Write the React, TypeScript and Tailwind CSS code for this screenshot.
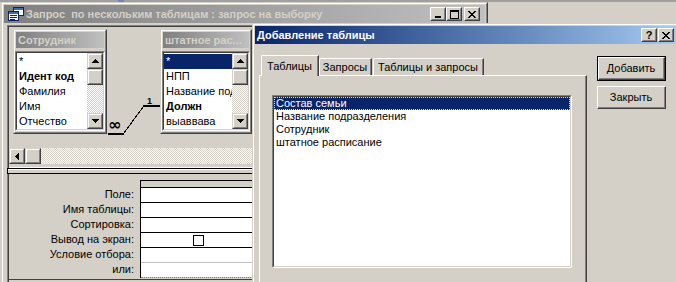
import React from 'react'

type Dir = 'up' | 'down' | 'left'

type Field = { name: string; bold?: boolean }

const employeeFields: Field[] = [
    { name: '*' },
    { name: 'Идент код', bold: true },
    { name: 'Фамилия' },
    { name: 'Имя' },
    { name: 'Отчество' },
]

const staffFields: Field[] = [
    { name: '*' },
    { name: 'НПП' },
    { name: 'Название подразделения' },
    { name: 'Должн', bold: true },
    { name: 'выаввава' },
]

const gridLabels = ['Поле:', 'Имя таблицы:', 'Сортировка:', 'Вывод на экран:', 'Условие отбора:', 'или:']

const tables = ['Состав семьи', 'Название подразделения', 'Сотрудник', 'штатное расписание']

function Arrow({ dir }: { dir: Dir }) {
    if (dir === 'left') {
        return (
            <svg width="4" height="7" viewBox="0 0 4 7" shapeRendering="crispEdges">
                <path d="M0 3h1v1H0zM1 2h1v3H1zM2 1h1v5H2zM3 0h1v7H3z" fill="#000" />
            </svg>
        )
    }
    return (
        <svg width="7" height="4" viewBox="0 0 7 4" shapeRendering="crispEdges">
            <path
                d={
                    dir === 'up'
                        ? 'M3 0h1v1H3zM2 1h3v1H2zM1 2h5v1H1zM0 3h7v1H0z'
                        : 'M0 0h7v1H0zM1 1h5v1H1zM2 2h3v1H2zM3 3h1v1H3z'
                }
                fill="#000"
            />
        </svg>
    )
}

function ScrollBtn({ dir }: { dir?: Dir }) {
    return (
        <div className="h-[16px] w-[16px] shrink-0 border border-t-[#d4d0c8] border-l-[#d4d0c8] border-r-[#404040] border-b-[#404040] bg-[#d4d0c8]">
            <div className="flex h-full w-full items-center justify-center border border-t-white border-l-white border-r-[#808080] border-b-[#808080]">
                {dir && <Arrow dir={dir} />}
            </div>
        </div>
    )
}

function CapBtn({ children }: { children: React.ReactNode }) {
    return (
        <div className="h-[14px] w-[16px] border border-t-white border-l-white border-r-[#404040] border-b-[#404040] bg-[#d4d0c8]">
            <div className="flex h-full w-full items-center justify-center border border-t-[#d4d0c8] border-l-[#d4d0c8] border-r-[#808080] border-b-[#808080]">
                {children}
            </div>
        </div>
    )
}

const CloseGlyph = () => (
    <svg width="8" height="7" viewBox="0 0 8 7" shapeRendering="crispEdges">
        <path d="M0 0h2v1H0zM6 0h2v1H6zM1 1h2v1H1zM5 1h2v1H5zM2 2h4v1H2zM3 3h2v1H3zM2 4h4v1H2zM1 5h2v1H1zM5 5h2v1H5zM0 6h2v1H0zM6 6h2v1H6z" fill="#000" />
    </svg>
)

function QueryIcon() {
    return (
        <svg width="16" height="16" viewBox="0 0 16 16" shapeRendering="crispEdges">
            <rect x="5.5" y="1.5" width="10" height="8" fill="#fff" stroke="#0a246a" />
            <rect x="6" y="2" width="9" height="2" fill="#3a6ea5" />
            <rect x="0.5" y="5.5" width="10" height="9" fill="#fff" stroke="#0a246a" />
            <rect x="1" y="6" width="9" height="2" fill="#3a6ea5" />
            <rect x="2" y="9" width="7" height="1" fill="#0a246a" />
            <rect x="2" y="11" width="7" height="1" fill="#0a246a" />
            <rect x="2" y="13" width="5" height="1" fill="#0a246a" />
        </svg>
    )
}

function FieldList({ pos, title, fields, selected }: { pos: string; title: string; fields: Field[]; selected?: number }) {
    return (
        <div className={`absolute h-[105px] ${pos} border border-t-[#d4d0c8] border-l-[#d4d0c8] border-r-[#404040] border-b-[#404040] bg-[#d4d0c8]`}>
            <div className="flex h-full flex-col border border-t-white border-l-white border-r-[#808080] border-b-[#808080]">
                <div className="mx-[1px] mt-[1px] flex h-[16px] shrink-0 items-center overflow-hidden whitespace-nowrap bg-linear-to-r from-[#808080] to-[#c0c0c0] pl-[2px] font-bold text-[#d4d0c8]">
                    {title}
                </div>
                <div className="mt-[3px] h-[80px] shrink-0 border border-t-[#808080] border-l-[#808080] border-r-white border-b-white">
                    <div className="flex h-full border border-t-[#404040] border-l-[#404040] border-r-[#d4d0c8] border-b-[#d4d0c8] bg-white">
                        <div className="min-w-0 flex-1 overflow-hidden pt-[1px]">
                            {fields.map((f, i) => (
                                <div
                                    key={f.name}
                                    className={`h-[15px] whitespace-nowrap pl-[2px] leading-[15px] ${f.bold ? 'font-bold' : ''} ${i === selected ? 'bg-[#0a246a] text-white' : ''}`}
                                >
                                    {f.name}
                                </div>
                            ))}
                        </div>
                        <div className="flex w-[16px] flex-col">
                            <ScrollBtn dir="up" />
                            <ScrollBtn />
                            <div className="flex-1 bg-[conic-gradient(#d4d0c8_25%,#ffffff_0_50%,#d4d0c8_0_75%,#ffffff_0)] bg-[length:2px_2px]" />
                            <ScrollBtn dir="down" />
                        </div>
                    </div>
                </div>
            </div>
        </div>
    )
}

function QueryWindow() {
    return (
        <div className="absolute left-[1px] top-[2px] h-[290px] w-[487px] border border-t-[#d4d0c8] border-l-[#d4d0c8] border-r-[#404040] border-b-[#404040]">
            <div className="flex h-full flex-col border border-t-white border-l-white border-r-[#808080] border-b-[#808080] p-[1px]">
                <div className="flex h-[18px] shrink-0 items-center bg-linear-to-r from-[#808080] to-[#c0c0c0]">
                    <div className="ml-[4px] flex">
                        <QueryIcon />
                    </div>
                    <span className="ml-[2px] whitespace-pre font-bold text-[#d4d0c8]">
                        Запрос  по нескольким таблицам : запрос на выборку
                    </span>
                    <div className="ml-auto mr-[5px] flex">
                        <CapBtn>
                            <svg width="6" height="7" viewBox="0 0 6 7" shapeRendering="crispEdges">
                                <rect x="0" y="5" width="6" height="2" fill="#000" />
                            </svg>
                        </CapBtn>
                        <CapBtn>
                            <svg width="9" height="9" viewBox="0 0 9 9" shapeRendering="crispEdges">
                                <path d="M0 0h9v2H0zM0 2h1v7H0zM8 2h1v7H8zM1 8h7v1H1z" fill="#000" />
                            </svg>
                        </CapBtn>
                        <div className="ml-[2px]">
                            <CapBtn>
                                <CloseGlyph />
                            </CapBtn>
                        </div>
                    </div>
                </div>

                <div className="ml-[3px] mt-[2px] flex-1 border-l border-t border-l-[#808080] border-t-[#808080]">
                    <div className="flex h-full flex-col border-l border-t border-l-[#404040] border-t-[#404040]">
                        {/* table pane */}
                        <div className="relative h-[121px] shrink-0">
                            <FieldList pos="left-[4px] top-[2px] w-[94px]" title="Сотрудник" fields={employeeFields} />
                            <FieldList pos="left-[151px] top-[2px] w-[92px]" title="штатное рас..." fields={staffFields} selected={0} />
                            <svg className="absolute left-0 top-0" width="160" height="121" shapeRendering="crispEdges">
                                <rect x="99" y="106" width="16" height="2" fill="#000" />
                                <line x1="114.5" y1="106.5" x2="134.5" y2="79.5" stroke="#000" strokeWidth="1" />
                                <rect x="134" y="78" width="17" height="2" fill="#000" />
                            </svg>
                            <span className="absolute left-[99px] top-[90px] font-['DejaVu_Sans',sans-serif] text-[16px] font-bold leading-none">
                                ∞
                            </span>
                            <span className="absolute left-[138px] top-[70px] text-[9px] font-bold leading-none">1</span>
                        </div>

                        {/* horizontal scrollbar */}
                        <div className="flex h-[16px] shrink-0">
                            <ScrollBtn dir="left" />
                            <ScrollBtn />
                            <div className="flex-1 bg-[conic-gradient(#d4d0c8_25%,#ffffff_0_50%,#d4d0c8_0_75%,#ffffff_0)] bg-[length:2px_2px]" />
                        </div>

                        {/* splitter */}
                        <div className="mt-[3px] h-[1px] shrink-0 bg-white" />
                        <div className="-ml-[2px] h-[6px] shrink-0 border-y border-l border-black bg-[#d4d0c8]">
                            <div className="h-[1px] bg-white" />
                        </div>

                        {/* design grid */}
                        <div className="flex shrink-0">
                            <div className="w-[131px] shrink-0 pr-[6px] pt-[13px] text-right">
                                {gridLabels.map(l => (
                                    <div key={l} className="h-[15px] whitespace-nowrap leading-[15px]">
                                        {l}
                                    </div>
                                ))}
                            </div>
                            <div className="flex-1 pt-[6px]">
                                <div className="border-l border-black">
                                    <div className="h-[7px] border-t border-black bg-[#d4d0c8]" />
                                    {[0, 1, 2, 3, 4].map(i => (
                                        <div key={i} className="flex h-[15px] items-center border-t border-black bg-white pl-[52px]">
                                            {i === 3 && <div className="h-[11px] w-[11px] border border-black bg-white" />}
                                        </div>
                                    ))}
                                    <div className="h-[15px] border-t border-[#c0c0c0] bg-white" />
                                    <div className="h-0 border-t border-dotted border-[#808080]" />
                                </div>
                            </div>
                        </div>
                        <div className="mt-[1px] h-[1px] shrink-0 bg-[#404040]" />
                    </div>
                </div>
            </div>
        </div>
    )
}

function AddTableDialog() {
    return (
        <div className="absolute left-[252px] top-[23px] h-[270px] w-[427px] border border-t-[#d4d0c8] border-l-[#d4d0c8] border-r-[#404040] border-b-[#404040] bg-[#d4d0c8]">
            <div className="flex h-full flex-col border border-t-white border-l-white border-r-[#808080] border-b-[#808080] p-[1px]">
                <div className="flex h-[18px] shrink-0 items-center bg-linear-to-r from-[#0a246a] to-[#a6caf0] pl-[2px] pr-[2px]">
                    <span className="flex-1 font-bold text-white">Добавление таблицы</span>
                    <CapBtn>
                        <span className="text-[11px] font-bold leading-none">?</span>
                    </CapBtn>
                    <div className="ml-[1px]">
                        <CapBtn>
                            <CloseGlyph />
                        </CapBtn>
                    </div>
                </div>

                <div className="flex">
                    <div className="ml-[4px] flex flex-col pt-[11px]">
                        <div className="flex h-[20px] items-end pl-[2px]">
                            <div className="relative z-10 -mb-[1px] h-[21px] w-[58px] rounded-tl-[2px] border-l border-t border-r border-l-white border-t-white border-r-[#404040] bg-[#d4d0c8]">
                                <div className="flex h-full items-center justify-center border-r border-r-[#808080]">Таблицы</div>
                            </div>
                            <div className="h-[17px] w-[53px] rounded-tl-[2px] border-l border-t border-r border-l-white border-t-white border-r-[#404040]">
                                <div className="flex h-full items-center justify-center border-r border-r-[#808080]">Запросы</div>
                            </div>
                            <div className="ml-[1px] h-[17px] w-[111px] rounded-tl-[2px] border-l border-t border-r border-l-white border-t-white border-r-[#404040]">
                                <div className="flex h-full items-center justify-center border-r border-r-[#808080]">Таблицы и запросы</div>
                            </div>
                        </div>
                        <div className="h-[220px] w-[328px] border-l border-t border-r border-l-white border-t-white border-r-[#404040]">
                            <div className="h-full border-r border-r-[#808080] pl-[12px] pt-[19px]">
                                <div className="h-[173px] w-[300px] border border-t-[#808080] border-l-[#808080] border-r-white border-b-white">
                                    <div className="h-full border border-t-[#404040] border-l-[#404040] border-r-[#d4d0c8] border-b-[#d4d0c8] bg-white">
                                        {tables.map((t, i) => (
                                            <div
                                                key={t}
                                                className={`h-[13px] whitespace-nowrap pl-[2px] leading-[13px] ${i === 0 ? 'bg-[#0a246a] text-white outline-1 -outline-offset-1 outline-dotted outline-[#f5db95]' : ''}`}
                                            >
                                                {t}
                                            </div>
                                        ))}
                                    </div>
                                </div>
                            </div>
                        </div>
                    </div>

                    <div className="ml-[10px] flex flex-col gap-[5px] pt-[12px]">
                        <div className="h-[25px] w-[69px] border border-black">
                            <div className="h-full border border-t-white border-l-white border-r-[#404040] border-b-[#404040]">
                                <div className="flex h-full items-center justify-center border-r border-b border-r-[#808080] border-b-[#808080]">
                                    Добавить
                                </div>
                            </div>
                        </div>
                        <div className="h-[23px] w-[69px] border border-t-white border-l-white border-r-[#404040] border-b-[#404040]">
                            <div className="flex h-full items-center justify-center border-r border-b border-r-[#808080] border-b-[#808080]">
                                Закрыть
                            </div>
                        </div>
                    </div>
                </div>
            </div>
        </div>
    )
}

export default function App() {
    return (
        <div className="relative h-[282px] w-[676px] overflow-hidden bg-[#d4d0c8] font-['Liberation_Sans',Arial,sans-serif] text-[11px] text-black">
            <div className="h-[2px] bg-[#a0a0a0]" />
            <div className="absolute left-[118px] top-0 h-[2px] w-[6px] bg-[#6b86b8]" />
            <QueryWindow />
            <AddTableDialog />
        </div>
    )
}
